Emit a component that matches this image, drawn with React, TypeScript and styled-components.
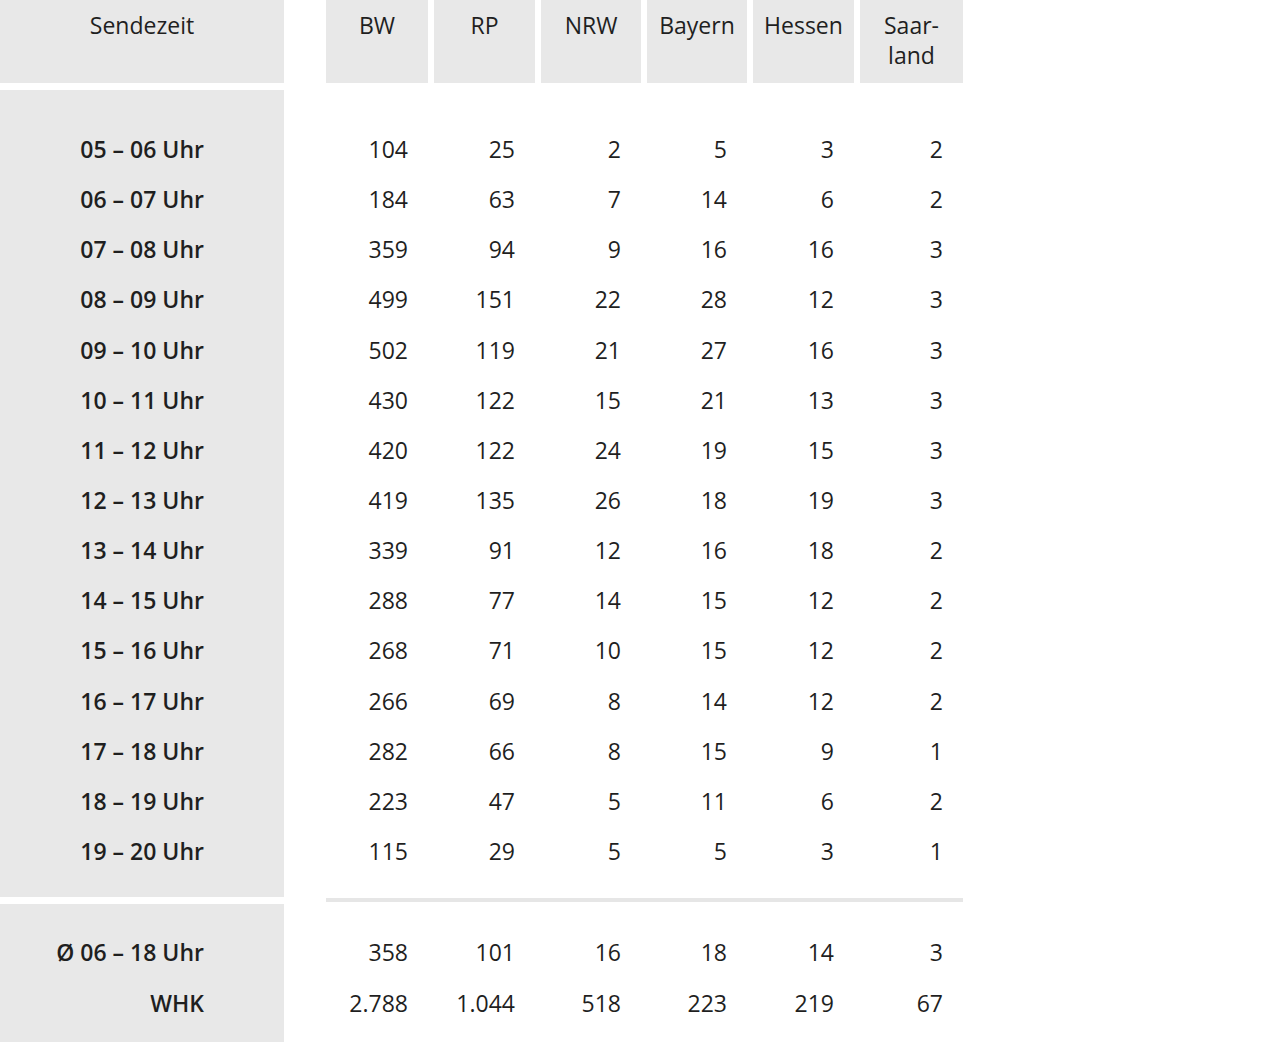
import React from 'react';
import styled, { createGlobalStyle } from 'styled-components';

const GRAY = '#e8e8e8';
const COLS = '102px 101px 100px 100px 101px 103px';

const GlobalStyle = createGlobalStyle`
  html, body {
    margin: 0;
    padding: 0;
    background: #fff;
  }
  body {
    font-family: 'Open Sans', 'Noto Sans', sans-serif;
    color: #1f1f1f;
    -webkit-font-smoothing: antialiased;
  }
`;

const Table = styled.div`
  width: 1280px;
  display: flex;
  flex-direction: column;
`;

const HeaderRow = styled.div`
  display: flex;
  height: 83px;
`;

const HeaderLabel = styled.div`
  width: 284px;
  background: ${GRAY};
`;

const HeaderCells = styled.div`
  display: grid;
  grid-template-columns: ${COLS};
  column-gap: 6px;
  margin-left: 42px;
`;

const HeaderCell = styled.div`
  background: ${GRAY};
  padding-top: 10px;
  text-align: center;
  font-size: 23px;
  line-height: 30px;
  font-weight: 400;
`;

const Section = styled.div<{ $top: number; $bottom: number; $gap: number }>`
  margin-top: ${(p) => p.$gap}px;
  padding: ${(p) => p.$top}px 0 ${(p) => p.$bottom}px;
  background: linear-gradient(to right, ${GRAY} 284px, transparent 284px);
`;

const Row = styled.div<{ $h: number }>`
  display: flex;
  height: ${(p) => p.$h}px;
  align-items: center;
  font-size: 23px;
`;

const Label = styled.div`
  width: 284px;
  box-sizing: border-box;
  padding-right: 80px;
  text-align: right;
  font-weight: 600;
  white-space: nowrap;
`;

const Cells = styled.div`
  display: grid;
  grid-template-columns: ${COLS};
  column-gap: 6px;
  margin-left: 42px;
`;

const Num = styled.div`
  box-sizing: border-box;
  padding-right: 20px;
  text-align: right;
`;

const Divider = styled.div`
  padding: 1px 0 2px 326px;
`;

const Rule = styled.div`
  width: 637px;
  height: 4px;
  background: #e6e6e6;
`;

const headers: React.ReactNode[] = [
  'BW',
  'RP',
  'NRW',
  'Bayern',
  'Hessen',
  <>
    Saar-
    <br />
    land
  </>,
];

const rows: [string, string[]][] = [
  ['05 – 06 Uhr', ['104', '25', '2', '5', '3', '2']],
  ['06 – 07 Uhr', ['184', '63', '7', '14', '6', '2']],
  ['07 – 08 Uhr', ['359', '94', '9', '16', '16', '3']],
  ['08 – 09 Uhr', ['499', '151', '22', '28', '12', '3']],
  ['09 – 10 Uhr', ['502', '119', '21', '27', '16', '3']],
  ['10 – 11 Uhr', ['430', '122', '15', '21', '13', '3']],
  ['11 – 12 Uhr', ['420', '122', '24', '19', '15', '3']],
  ['12 – 13 Uhr', ['419', '135', '26', '18', '19', '3']],
  ['13 – 14 Uhr', ['339', '91', '12', '16', '18', '2']],
  ['14 – 15 Uhr', ['288', '77', '14', '15', '12', '2']],
  ['15 – 16 Uhr', ['268', '71', '10', '15', '12', '2']],
  ['16 – 17 Uhr', ['266', '69', '8', '14', '12', '2']],
  ['17 – 18 Uhr', ['282', '66', '8', '15', '9', '1']],
  ['18 – 19 Uhr', ['223', '47', '5', '11', '6', '2']],
  ['19 – 20 Uhr', ['115', '29', '5', '5', '3', '1']],
];

const totals: [string, string[]][] = [
  ['Ø 06 – 18 Uhr', ['358', '101', '16', '18', '14', '3']],
  ['WHK', ['2.788', '1.044', '518', '223', '219', '67']],
];

const DataRow: React.FC<{ label: string; values: string[]; h: number }> = ({ label, values, h }) => (
  <Row $h={h}>
    <Label>{label}</Label>
    <Cells>
      {values.map((v, i) => (
        <Num key={i}>{v}</Num>
      ))}
    </Cells>
  </Row>
);

const App: React.FC = () => {
  return (
    <>
      <GlobalStyle />
      <Table>
        <HeaderRow>
          <HeaderLabel>
            <HeaderCell>Sendezeit</HeaderCell>
          </HeaderLabel>
          <HeaderCells>
            {headers.map((h, i) => (
              <HeaderCell key={i}>{h}</HeaderCell>
            ))}
          </HeaderCells>
        </HeaderRow>

        <Section $gap={7} $top={34} $bottom={21}>
          {rows.map(([label, values]) => (
            <DataRow key={label} label={label} values={values} h={50.15} />
          ))}
        </Section>

        <Divider>
          <Rule />
        </Divider>

        <Section $gap={0} $top={22} $bottom={14}>
          {totals.map(([label, values]) => (
            <DataRow key={label} label={label} values={values} h={51} />
          ))}
        </Section>
      </Table>
    </>
  );
};

export default App;
